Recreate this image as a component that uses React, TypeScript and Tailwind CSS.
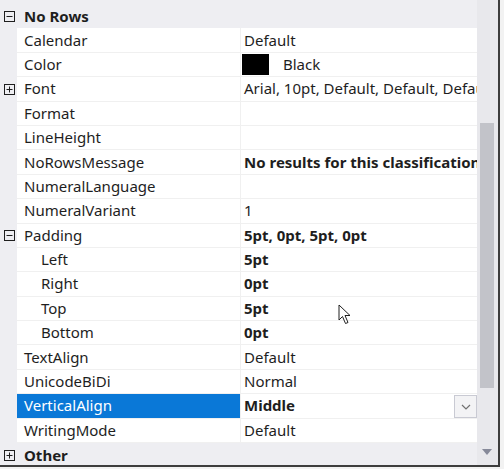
import React from 'react';

type Row = {
  name: string;
  value?: string;
  bold?: boolean;
  indent?: boolean;
  expander?: 'plus' | 'minus';
  swatch?: boolean;
  selected?: boolean;
  dropdown?: boolean;
};

const rows: Row[] = [
  { name: 'Calendar', value: 'Default' },
  { name: 'Color', value: 'Black', swatch: true },
  { name: 'Font', value: 'Arial, 10pt, Default, Default, Default', expander: 'plus' },
  { name: 'Format' },
  { name: 'LineHeight' },
  { name: 'NoRowsMessage', value: 'No results for this classification', bold: true },
  { name: 'NumeralLanguage' },
  { name: 'NumeralVariant', value: '1' },
  { name: 'Padding', value: '5pt, 0pt, 5pt, 0pt', bold: true, expander: 'minus' },
  { name: 'Left', value: '5pt', bold: true, indent: true },
  { name: 'Right', value: '0pt', bold: true, indent: true },
  { name: 'Top', value: '5pt', bold: true, indent: true },
  { name: 'Bottom', value: '0pt', bold: true, indent: true },
  { name: 'TextAlign', value: 'Default' },
  { name: 'UnicodeBiDi', value: 'Normal' },
  { name: 'VerticalAlign', value: 'Middle', bold: true, selected: true, dropdown: true },
  { name: 'WritingMode', value: 'Default' },
];

function Expander({ kind }: { kind: 'plus' | 'minus' }) {
  return (
    <svg width="11" height="11" viewBox="0 0 11 11" className="block">
      <rect x="0.5" y="0.5" width="10" height="10" fill="none" stroke="#1e1e1e" strokeWidth="1" />
      <line x1="2.5" y1="5.5" x2="8.5" y2="5.5" stroke="#1e1e1e" strokeWidth="1" />
      {kind === 'plus' && <line x1="5.5" y1="2.5" x2="5.5" y2="8.5" stroke="#1e1e1e" strokeWidth="1" />}
    </svg>
  );
}

function Category({ name, kind }: { name: string; kind: 'plus' | 'minus' }) {
  return (
    <div className="flex items-center h-[24.4px] shrink-0">
      <div className="w-[17px] flex justify-center pl-[2px]">
        <Expander kind={kind} />
      </div>
      <span className="pl-[7px] font-bold text-[#1e1e1e]">{name}</span>
    </div>
  );
}

function PropRow({ r }: { r: Row }) {
  return (
    <div className="flex h-[24.4px] shrink-0">
      <div className="w-[17px] flex items-center justify-center pl-[2px]">
        {r.expander && <Expander kind={r.expander} />}
      </div>
      <div
        className={`w-[224px] flex items-center border-b border-r border-[#f0f0f0] whitespace-nowrap overflow-hidden ${
          r.indent ? 'pl-[24px]' : 'pl-[7px]'
        } ${r.selected ? 'bg-[#0a78d7] text-white' : 'bg-white text-[#1e1e1e]'}`}
      >
        {r.name}
      </div>
      <div className="flex-1 flex items-center bg-white border-b border-[#f0f0f0] whitespace-nowrap overflow-hidden pl-[3px] text-[#1e1e1e] relative">
        {r.swatch && <span className="w-[27px] h-[21px] bg-black mr-[14px] -ml-[2px] shrink-0" />}
        <span className={r.bold ? 'font-bold' : ''}>{r.value}</span>
        {r.dropdown && (
          <span className="absolute right-0 top-[1px] w-[23px] h-[23px] border border-[#c9cad3] bg-[#f3f3f5] flex items-center justify-center">
            <svg width="10" height="6" viewBox="0 0 10 6">
              <path d="M1 1 L5 5 L9 1" fill="none" stroke="#717171" strokeWidth="1.2" />
            </svg>
          </span>
        )}
      </div>
    </div>
  );
}

export default function App() {
  return (
    <div className="w-[504px] h-[469px] bg-[#f2f2f2] overflow-hidden" style={{ fontFamily: '"Noto Sans", "Open Sans", sans-serif' }}>
      <div className="relative w-[500px] h-[467px] bg-[#eeeef2] border-r-2 border-b-2 border-[#3d3d3d] flex text-[15px] leading-none">
        <div className="flex-1 flex flex-col pt-[4px] overflow-hidden">
          <Category name="No Rows" kind="minus" />
          {rows.map(r => (
            <PropRow key={r.name} r={r} />
          ))}
          <Category name="Other" kind="plus" />
        </div>
        <div className="w-[21px] bg-[#e8e8ec] relative shrink-0">
          <div className="absolute left-[3px] top-[123px] w-[14px] h-[265px] bg-[#c2c3c9]" />
          <svg className="absolute left-[5px] top-[449px]" width="10" height="6" viewBox="0 0 10 6">
            <path d="M0 0 L10 0 L5 6 Z" fill="#868999" />
          </svg>
        </div>
        <svg className="absolute left-[338px] top-[304px]" width="14" height="22" viewBox="0 0 14 22">
          <path d="M1 1 L1 16 L4.5 12.5 L7.5 19.5 L10 18.5 L7 11.5 L12 11.5 Z" fill="#ffffff" stroke="#202020" strokeWidth="1" strokeLinejoin="round" />
        </svg>
      </div>
    </div>
  );
}
